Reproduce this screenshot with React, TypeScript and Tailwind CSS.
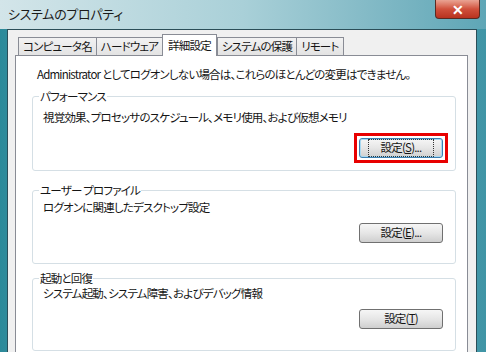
import React from "react";

const groups = [
  { title: "パフォーマンス", text: "視覚効果、プロセッサのスケジュール、メモリ使用、および仮想メモリ", key: "S", dots: true, focus: true, box: "mt-[6px] h-[82px]", pt: "pt-[6px]", bm: "mt-[12px]" },
  { title: "ユーザー プロファイル", text: "ログオンに関連したデスクトップ設定", key: "E", dots: true, focus: false, box: "mt-[12px] h-[81px]", pt: "pt-[2px]", bm: "mt-[7px]" },
  { title: "起動と回復", text: "システム起動、システム障害、およびデバッグ情報", key: "T", dots: false, focus: false, box: "mt-[7px] h-[80px]", pt: "pt-[0px]", bm: "mt-[7px]" },
];

const tabs = ["コンピュータ名", "ハードウェア", "詳細設定", "システムの保護", "リモート"];

const SettingsButton = ({ k, dots, focus }: { k: string; dots: boolean; focus: boolean }) => (
  <button
    className={
      "w-[84px] h-[20px] rounded-[3px] border bg-gradient-to-b from-[#f6f6f6] via-[#e6e6e6] to-[#cfcfcf] text-[11.5px] leading-none flex items-center justify-center " +
      (focus ? "border-[#3c7fb1] shadow-[inset_0_0_0_1px_#a8d8f0]" : "border-[#707070]")
    }
  >
    <span className={focus ? "outline-1 outline-dotted outline-[#333] px-[12px] py-[2px]" : ""}>
      設定(<span className="underline">{k}</span>){dots ? "..." : ""}
    </span>
  </button>
);

export default function App() {
  return (
    <div className="w-[486px] h-[352px] overflow-hidden flex flex-col bg-gradient-to-r from-[#2c8a9a] via-[#7fb7c3] to-[#3f95a6] font-['Noto_Sans_CJK_JP',sans-serif] text-[#151515] text-[11.5px] tracking-[-0.8px] [font-feature-settings:'palt']">
      {/* title bar */}
      <div className="h-[29px] flex justify-between bg-gradient-to-r from-[#d3e5e9] via-[#a9d0d8] to-[#5ea6b6]">
        <div className="pl-[8px] pt-[4px] text-[13px] tracking-[-0.3px] text-[#1a1a1a]">システムのプロパティ</div>
        <div className="mr-[6px] w-[45px] h-[19px] rounded-b-[4px] border border-t-0 border-[#5a2a22] bg-gradient-to-b from-[#e9a393] via-[#d0503c] to-[#b8321f] flex items-center justify-center text-white text-[14px] font-bold leading-none">
          ✕
        </div>
      </div>

      {/* dialog body */}
      <div className="flex-1 ml-[7px] mr-[9px] bg-[#f0f0f0] border border-[#2b4e58] border-b-0 pt-[3px] pl-[7px] pr-[8px] flex flex-col">
        <div className="flex items-end h-[22px] pl-[3px]">
          {tabs.map((t, i) =>
            i === 2 ? (
              <div key={t} className="h-[22px] -mb-px z-10 bg-white border border-b-0 border-[#898c95] px-[5px] pt-[2px]">
                {t}
              </div>
            ) : (
              <div key={t} className="h-[18px] bg-gradient-to-b from-[#f2f2f2] to-[#e3e3e3] border border-b-0 border-[#898c95] px-[4px] leading-[17px] -mr-px">
                {t}
              </div>
            )
          )}
        </div>
        <div className="flex-1 bg-white border border-[#898c95] border-b-0 pl-[16px] pr-[11px] pt-[10px]">
          <div className="pl-[5px] leading-[17px] whitespace-nowrap">Administrator としてログオンしない場合は、これらのほとんどの変更はできません。</div>
          {groups.map((g) => (
            <fieldset key={g.title} className={"border border-[#d5dfe5] rounded-[3px] px-[10px] " + g.box}>
              <legend className="px-[1px] ml-[-4px] leading-[14px]">{g.title}</legend>
              <div className={"leading-[17px] " + g.pt}>{g.text}</div>
              <div className={"flex justify-end mr-[2px] " + g.bm}>
                {g.focus ? (
                  <div className="border-[3px] border-[#e80000] p-[2px] -my-[5px] -mr-[5px]">
                    <SettingsButton k={g.key} dots={g.dots} focus />
                  </div>
                ) : (
                  <SettingsButton k={g.key} dots={g.dots} focus={false} />
                )}
              </div>
            </fieldset>
          ))}
        </div>
      </div>
    </div>
  );
}
